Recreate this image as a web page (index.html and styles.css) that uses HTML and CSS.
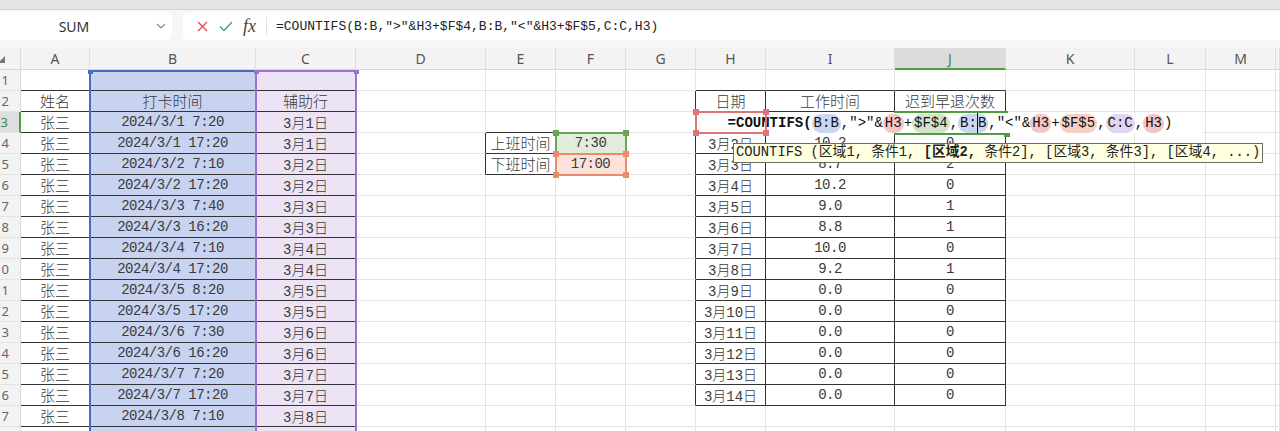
FILE: index.html
```html
<!DOCTYPE html>
<html lang="zh-CN">
<head>
<meta charset="utf-8">
<title>COUNTIFS</title>
<link rel="stylesheet" href="styles.css">
</head>
<body>
<div class="top"></div>
<div class="fbar">
  <div class="name"><span class="nm">SUM</span><svg class="chev" width="10" height="6" viewBox="0 0 10 6"><path d="M1 1l4 4 4-4" fill="none" stroke="#8a8a8a" stroke-width="1.2"/></svg></div>
  <div class="fbox">
    <svg class="ic-x" width="11" height="11" viewBox="0 0 11 11"><path d="M1 1l9 9M10 1l-9 9" stroke="#d9505a" stroke-width="1.4" fill="none"/></svg>
    <svg class="ic-ok" width="14" height="11" viewBox="0 0 14 11"><path d="M1 5.5l4 4L13 1" stroke="#43a083" stroke-width="1.4" fill="none"/></svg>
    <span class="fx">fx</span>
    <span class="sep"></span>
    <span class="ftext">=COUNTIFS(B:B,"&gt;"&amp;H3+$F$4,B:B,"&lt;"&amp;H3+$F$5,C:C,H3)</span>
  </div>
</div>
<div class="sheet">
  <div class="hr">
    <div class="corner"><span class="tri"></span></div>
    <div class="ch">A</div><div class="ch">B</div><div class="ch">C</div><div class="ch">D</div><div class="ch">E</div><div class="ch">F</div><div class="ch">G</div><div class="ch">H</div><div class="ch">I</div><div class="ch sel">J</div><div class="ch">K</div><div class="ch">L</div><div class="ch">M</div><div class="ch"></div>
  </div>
  <div class="r"><div class="h"><span>1</span></div><div class="c kb"></div><div class="c b kb"></div><div class="c p kb"></div><div class="c"></div><div class="c"></div><div class="c"></div><div class="c"></div><div class="c kb"></div><div class="c kb"></div><div class="c kb"></div><div class="c"></div><div class="c"></div><div class="c"></div><div class="c"></div></div>
  <div class="r"><div class="h"><span>2</span></div><div class="c z k">姓名</div><div class="c b z k">打卡时间</div><div class="c p z k">辅助行</div><div class="c"></div><div class="c"></div><div class="c"></div><div class="c kr"></div><div class="c z k">日期</div><div class="c z k">工作时间</div><div class="c z k">迟到早退次数</div><div class="c"></div><div class="c"></div><div class="c"></div><div class="c"></div></div>
  <div class="r"><div class="h hs"><span>3</span></div><div class="c z k">张三</div><div class="c b n k">2024/3/1 7:20</div><div class="c p k">3月1日</div><div class="c"></div><div class="c kb"></div><div class="c kb"></div><div class="c kr"></div><div class="c k">3月1日</div><div class="c n k">10.0</div><div class="c k"></div><div class="c"></div><div class="c"></div><div class="c"></div><div class="c"></div></div>
  <div class="r"><div class="h"><span>4</span></div><div class="c z k">张三</div><div class="c b n k">2024/3/1 17:20</div><div class="c p k">3月1日</div><div class="c kr"></div><div class="c z k">上班时间</div><div class="c n g">7:30</div><div class="c kr"></div><div class="c k">3月2日</div><div class="c n k">10.2</div><div class="c n k">0</div><div class="c"></div><div class="c"></div><div class="c"></div><div class="c"></div></div>
  <div class="r"><div class="h"><span>5</span></div><div class="c z k">张三</div><div class="c b n k">2024/3/2 7:10</div><div class="c p k">3月2日</div><div class="c kr"></div><div class="c z k">下班时间</div><div class="c n o">17:00</div><div class="c kr"></div><div class="c k">3月3日</div><div class="c n k">8.7</div><div class="c n k">2</div><div class="c"></div><div class="c"></div><div class="c"></div><div class="c"></div></div>
  <div class="r"><div class="h"><span>6</span></div><div class="c z k">张三</div><div class="c b n k">2024/3/2 17:20</div><div class="c p k">3月2日</div><div class="c"></div><div class="c"></div><div class="c"></div><div class="c kr"></div><div class="c k">3月4日</div><div class="c n k">10.2</div><div class="c n k">0</div><div class="c"></div><div class="c"></div><div class="c"></div><div class="c"></div></div>
  <div class="r"><div class="h"><span>7</span></div><div class="c z k">张三</div><div class="c b n k">2024/3/3 7:40</div><div class="c p k">3月3日</div><div class="c"></div><div class="c"></div><div class="c"></div><div class="c kr"></div><div class="c k">3月5日</div><div class="c n k">9.0</div><div class="c n k">1</div><div class="c"></div><div class="c"></div><div class="c"></div><div class="c"></div></div>
  <div class="r"><div class="h"><span>8</span></div><div class="c z k">张三</div><div class="c b n k">2024/3/3 16:20</div><div class="c p k">3月3日</div><div class="c"></div><div class="c"></div><div class="c"></div><div class="c kr"></div><div class="c k">3月6日</div><div class="c n k">8.8</div><div class="c n k">1</div><div class="c"></div><div class="c"></div><div class="c"></div><div class="c"></div></div>
  <div class="r"><div class="h"><span>9</span></div><div class="c z k">张三</div><div class="c b n k">2024/3/4 7:10</div><div class="c p k">3月4日</div><div class="c"></div><div class="c"></div><div class="c"></div><div class="c kr"></div><div class="c k">3月7日</div><div class="c n k">10.0</div><div class="c n k">0</div><div class="c"></div><div class="c"></div><div class="c"></div><div class="c"></div></div>
  <div class="r"><div class="h"><span>10</span></div><div class="c z k">张三</div><div class="c b n k">2024/3/4 17:20</div><div class="c p k">3月4日</div><div class="c"></div><div class="c"></div><div class="c"></div><div class="c kr"></div><div class="c k">3月8日</div><div class="c n k">9.2</div><div class="c n k">1</div><div class="c"></div><div class="c"></div><div class="c"></div><div class="c"></div></div>
  <div class="r"><div class="h"><span>11</span></div><div class="c z k">张三</div><div class="c b n k">2024/3/5 8:20</div><div class="c p k">3月5日</div><div class="c"></div><div class="c"></div><div class="c"></div><div class="c kr"></div><div class="c k">3月9日</div><div class="c n k">0.0</div><div class="c n k">0</div><div class="c"></div><div class="c"></div><div class="c"></div><div class="c"></div></div>
  <div class="r"><div class="h"><span>12</span></div><div class="c z k">张三</div><div class="c b n k">2024/3/5 17:20</div><div class="c p k">3月5日</div><div class="c"></div><div class="c"></div><div class="c"></div><div class="c kr"></div><div class="c k">3月10日</div><div class="c n k">0.0</div><div class="c n k">0</div><div class="c"></div><div class="c"></div><div class="c"></div><div class="c"></div></div>
  <div class="r"><div class="h"><span>13</span></div><div class="c z k">张三</div><div class="c b n k">2024/3/6 7:30</div><div class="c p k">3月6日</div><div class="c"></div><div class="c"></div><div class="c"></div><div class="c kr"></div><div class="c k">3月11日</div><div class="c n k">0.0</div><div class="c n k">0</div><div class="c"></div><div class="c"></div><div class="c"></div><div class="c"></div></div>
  <div class="r"><div class="h"><span>14</span></div><div class="c z k">张三</div><div class="c b n k">2024/3/6 16:20</div><div class="c p k">3月6日</div><div class="c"></div><div class="c"></div><div class="c"></div><div class="c kr"></div><div class="c k">3月12日</div><div class="c n k">0.0</div><div class="c n k">0</div><div class="c"></div><div class="c"></div><div class="c"></div><div class="c"></div></div>
  <div class="r"><div class="h"><span>15</span></div><div class="c z k">张三</div><div class="c b n k">2024/3/7 7:20</div><div class="c p k">3月7日</div><div class="c"></div><div class="c"></div><div class="c"></div><div class="c kr"></div><div class="c k">3月13日</div><div class="c n k">0.0</div><div class="c n k">0</div><div class="c"></div><div class="c"></div><div class="c"></div><div class="c"></div></div>
  <div class="r"><div class="h"><span>16</span></div><div class="c z k">张三</div><div class="c b n k">2024/3/7 17:20</div><div class="c p k">3月7日</div><div class="c"></div><div class="c"></div><div class="c"></div><div class="c kr"></div><div class="c k">3月14日</div><div class="c n k">0.0</div><div class="c n k">0</div><div class="c"></div><div class="c"></div><div class="c"></div><div class="c"></div></div>
  <div class="r"><div class="h"><span>17</span></div><div class="c z k">张三</div><div class="c b n k">2024/3/8 7:10</div><div class="c p k">3月8日</div><div class="c"></div><div class="c"></div><div class="c"></div><div class="c"></div><div class="c"></div><div class="c"></div><div class="c"></div><div class="c"></div><div class="c"></div><div class="c"></div><div class="c"></div></div>
  <div class="r"><div class="h"><span>18</span></div><div class="c"></div><div class="c b"></div><div class="c p"></div><div class="c"></div><div class="c"></div><div class="c"></div><div class="c"></div><div class="c"></div><div class="c"></div><div class="c"></div><div class="c"></div><div class="c"></div><div class="c"></div><div class="c"></div></div>

  <div class="ref ref-b"><i class="hd t l"></i><i class="hd t r2"></i></div>
  <div class="ref ref-c"><i class="hd t l"></i><i class="hd t r2"></i></div>
  <div class="ref ref-f4"><i class="hd t l"></i><i class="hd t r2"></i><i class="hd bt l"></i><i class="hd bt r2"></i></div>
  <div class="ref ref-f5"><i class="hd t l"></i><i class="hd t r2"></i><i class="hd bt l"></i><i class="hd bt r2"></i></div>
  <div class="active"><i class="hd bt r2"></i></div>
  <div class="editor"><b>=COUNTIFS(</b><span class="pl pb">B:B</span>,"&gt;"&amp;<span class="pl pr">H3</span>+<span class="pl pg">$F$4</span>,<span class="pl pb">B:<i class="caret"></i>B</span>,"&lt;"&amp;<span class="pl pr">H3</span>+<span class="pl po">$F$5</span>,<span class="pl pc">C:C</span>,<span class="pl pr">H3</span>)</div>
  <div class="ref ref-h3"><i class="hd t l"></i><i class="hd t r2"></i><i class="hd bt l"></i><i class="hd bt r2"></i></div>
  <div class="tip">COUNTIFS (区域1, 条件1, <b>[区域2, </b>条件2], [区域3, 条件3], [区域4, ...)</div>
</div>
</body>
</html>
```
FILE: styles.css
```css
html, body {
  margin: 0;
  padding: 0;
}
body {
  width: 1280px;
  height: 431px;
  overflow: hidden;
  background: #fff;
  font-family: "Liberation Mono", "Noto Sans CJK SC", monospace;
  color: #333;
}
.top {
  height: 10px;
  background: #e4e4e4;
  border-bottom: 1px solid #d4d4d4;
  box-sizing: border-box;
}
.fbar {
  height: 38px;
  box-sizing: border-box;
  padding-top: 2px;
  background: #f6f6f6;
  display: flex;
  align-items: flex-start;
  gap: 11px;
}
.name {
  margin-left: -8px;
  width: 180px;
  height: 28px;
  background: #fff;
  border-radius: 6px;
  display: flex;
  align-items: center;
}
.nm {
  width: 164px;
  text-align: center;
  font-family: "Noto Sans", "Open Sans", sans-serif;
  font-size: 14px;
  color: #333;
}
.chev {
  display: block;
}
.fbox {
  flex: 1;
  height: 28px;
  background: #fff;
  border-radius: 6px 0 0 6px;
  display: flex;
  align-items: center;
}
.ic-x { margin-left: 14px; display: block; }
.ic-ok { margin-left: 11px; display: block; }
.fx {
  margin-left: 10px;
  font-family: "Liberation Serif", serif;
  font-style: italic;
  font-size: 18px;
  color: #444;
  line-height: 1;
}
.sep {
  margin-left: 10px;
  width: 1px;
  height: 18px;
  background: #e0e0e0;
}
.ftext {
  margin-left: 9px;
  font-size: 13px;
  color: #222;
  white-space: nowrap;
}

.sheet {
  position: relative;
}
.hr, .r {
  display: grid;
  grid-template-columns: 21px 69px 166px 100px 130px 70px 70px 70px 70px 129px 111px 129px 71px 70px 1fr;
}
.hr {
  height: 22px;
  background: #f3f3f3;
}
.r {
  height: 21px;
}
.corner, .ch {
  box-sizing: border-box;
  border-right: 1px solid #dedede;
  border-bottom: 1px solid #d6d6d6;
}
.corner {
  position: relative;
  overflow: hidden;
}
.tri {
  position: absolute;
  left: -2px;
  bottom: 6px;
  width: 0;
  height: 0;
  border-left: 7px solid transparent;
  border-bottom: 7px solid #777;
}
.ch {
  display: flex;
  align-items: center;
  justify-content: center;
  font-family: "Noto Sans", "Open Sans", sans-serif;
  font-size: 14px;
  color: #555;
}
.ch.sel {
  background: #dcdcdc;
  color: #3d8a62;
  border-bottom: 2px solid #4f9d3f;
}
.h {
  box-sizing: border-box;
  background: #f3f3f3;
  border-right: 1px solid #d8d8d8;
  border-bottom: 1px solid #e3e3e3;
  display: flex;
  align-items: center;
  justify-content: flex-end;
  padding-right: 11px;
  overflow: hidden;
  font-family: "Noto Sans", "Open Sans", sans-serif;
  font-size: 13px;
  color: #666;
}
.h span { white-space: nowrap; }
.h.hs {
  background: #dedede;
  color: #3d8a62;
  border-right: 2px solid #4f9d3f;
}
.c {
  box-sizing: border-box;
  border-right: 1px solid #e3e3e3;
  border-bottom: 1px solid #e3e3e3;
  display: flex;
  align-items: center;
  justify-content: center;
  white-space: nowrap;
  font-size: 14px;
  font-weight: 300;
  color: #3a3a3a;
  overflow: hidden;
}
.c.n { font-size: 14px; letter-spacing: -0.5px; }
.c.z { font-size: 15px; }
.c.k { border-right-color: #333; border-bottom-color: #333; }
.c.kb { border-bottom-color: #333; }
.c.kr { border-right-color: #333; }
.c.b { background: #c7d3f1; }
.c.p { background: #ece3f4; }
.c.g { background: #e2ecdb; }
.c.o { background: #fbe3dc; }

.ref {
  position: absolute;
  box-sizing: border-box;
  border: 2px solid;
}
.ref-b {
  left: 89px;
  top: 22px;
  width: 168px;
  height: 420px;
  color: #4d68c0;
  border-color: #4d68c0;
}
.ref-c {
  left: 255px;
  top: 22px;
  width: 102px;
  height: 420px;
  color: #9a72d0;
  border-color: #9a72d0;
}
.ref-f4 {
  left: 555px;
  top: 84px;
  width: 72px;
  height: 23px;
  color: #6aa455;
  border-color: #6aa455;
}
.ref-f5 {
  left: 555px;
  top: 105px;
  width: 72px;
  height: 23px;
  color: #ec8b6a;
  border-color: #ec8b6a;
}
.ref-h3 {
  left: 695px;
  top: 63px;
  width: 72px;
  height: 23px;
  color: #e07474;
  border-color: #e07474;
}
.hd {
  position: absolute;
  width: 6px;
  height: 6px;
  background: currentColor;
}
.hd.t { top: -4px; }
.hd.bt { bottom: -4px; }
.hd.l { left: -4px; }
.hd.r2 { right: -4px; }
.ref-b .hd, .ref-c .hd { width: 5px; height: 4px; top: -2px; }
.ref-b .hd.l, .ref-c .hd.l { left: -3.5px; }
.ref-b .hd.r2, .ref-c .hd.r2 { right: -3.5px; }

.active {
  position: absolute;
  left: 894px;
  top: 63px;
  width: 114px;
  height: 24px;
  box-sizing: border-box;
  border: 2px solid #4f9d3f;
  color: #4f9d3f;
}
.editor {
  position: absolute;
  left: 697px;
  top: 65px;
  width: 506px;
  height: 20px;
  background: #fff;
  display: flex;
  align-items: center;
  justify-content: center;
  white-space: pre;
  font-size: 14px;
  color: #111;
}
.editor b { font-weight: bold; }
.pl {
  display: inline-flex;
  align-items: center;
  height: 19px;
  padding: 0 2px;
  border-radius: 9px;
}
.pb { background: #c9d5f1; }
.pr { background: #f3c6c6; }
.pg { background: #d2e2cb; }
.po { background: #f6d0c4; }
.pc { background: #e2d5f2; }
.caret {
  display: inline-block;
  width: 1px;
  height: 20px;
  background: #111;
}
.tip {
  position: absolute;
  left: 733px;
  top: 95px;
  width: 530px;
  height: 20px;
  box-sizing: border-box;
  padding-left: 2px;
  background: #ffffe1;
  border: 1px solid #6b6b6b;
  font-size: 13.8px;
  line-height: 18px;
  color: #222;
  white-space: nowrap;
  overflow: hidden;
}
.tip b { font-weight: bold; }
```
